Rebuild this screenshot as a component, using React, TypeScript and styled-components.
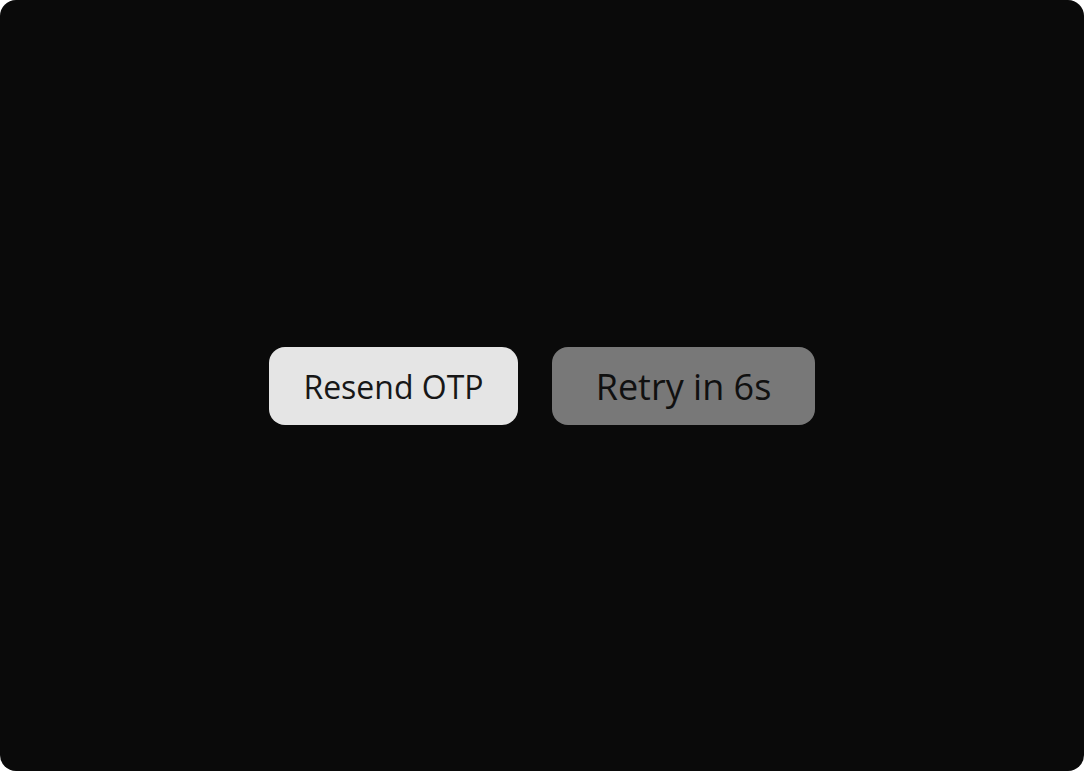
import React from 'react';
import styled, { createGlobalStyle } from 'styled-components';

const GlobalStyle = createGlobalStyle`
  html, body {
    margin: 0;
    padding: 0;
    background: #ffffff;
  }
  #root {
    height: 100vh;
  }
`;

const Screen = styled.div`
  height: 100vh;
  box-sizing: border-box;
  background: #0a0a0a;
  border-radius: 16px;
  display: flex;
  align-items: center;
  justify-content: center;
  gap: 34px;
  font-family: "Open Sans", "Noto Sans", sans-serif;
`;

const Button = styled.button<{ $disabled?: boolean; $size: number; $width: number }>`
  width: ${(p) => p.$width}px;
  height: 78px;
  border: none;
  border-radius: 16px;
  background: #e5e5e5;
  color: #171717;
  font-family: inherit;
  font-size: ${(p) => p.$size}px;
  display: flex;
  align-items: center;
  justify-content: center;
  padding: 2px 0 0;
  opacity: ${(p) => (p.$disabled ? 0.5 : 1)};
  cursor: ${(p) => (p.$disabled ? 'not-allowed' : 'pointer')};
`;

const App = () => {
  const seconds = 6;

  return (
    <>
      <GlobalStyle />
      <Screen>
        <Button $size={32} $width={249}>Resend OTP</Button>
        <Button $size={36} $width={263} $disabled disabled>
          Retry in {seconds}s
        </Button>
      </Screen>
    </>
  );
};

export default App;
